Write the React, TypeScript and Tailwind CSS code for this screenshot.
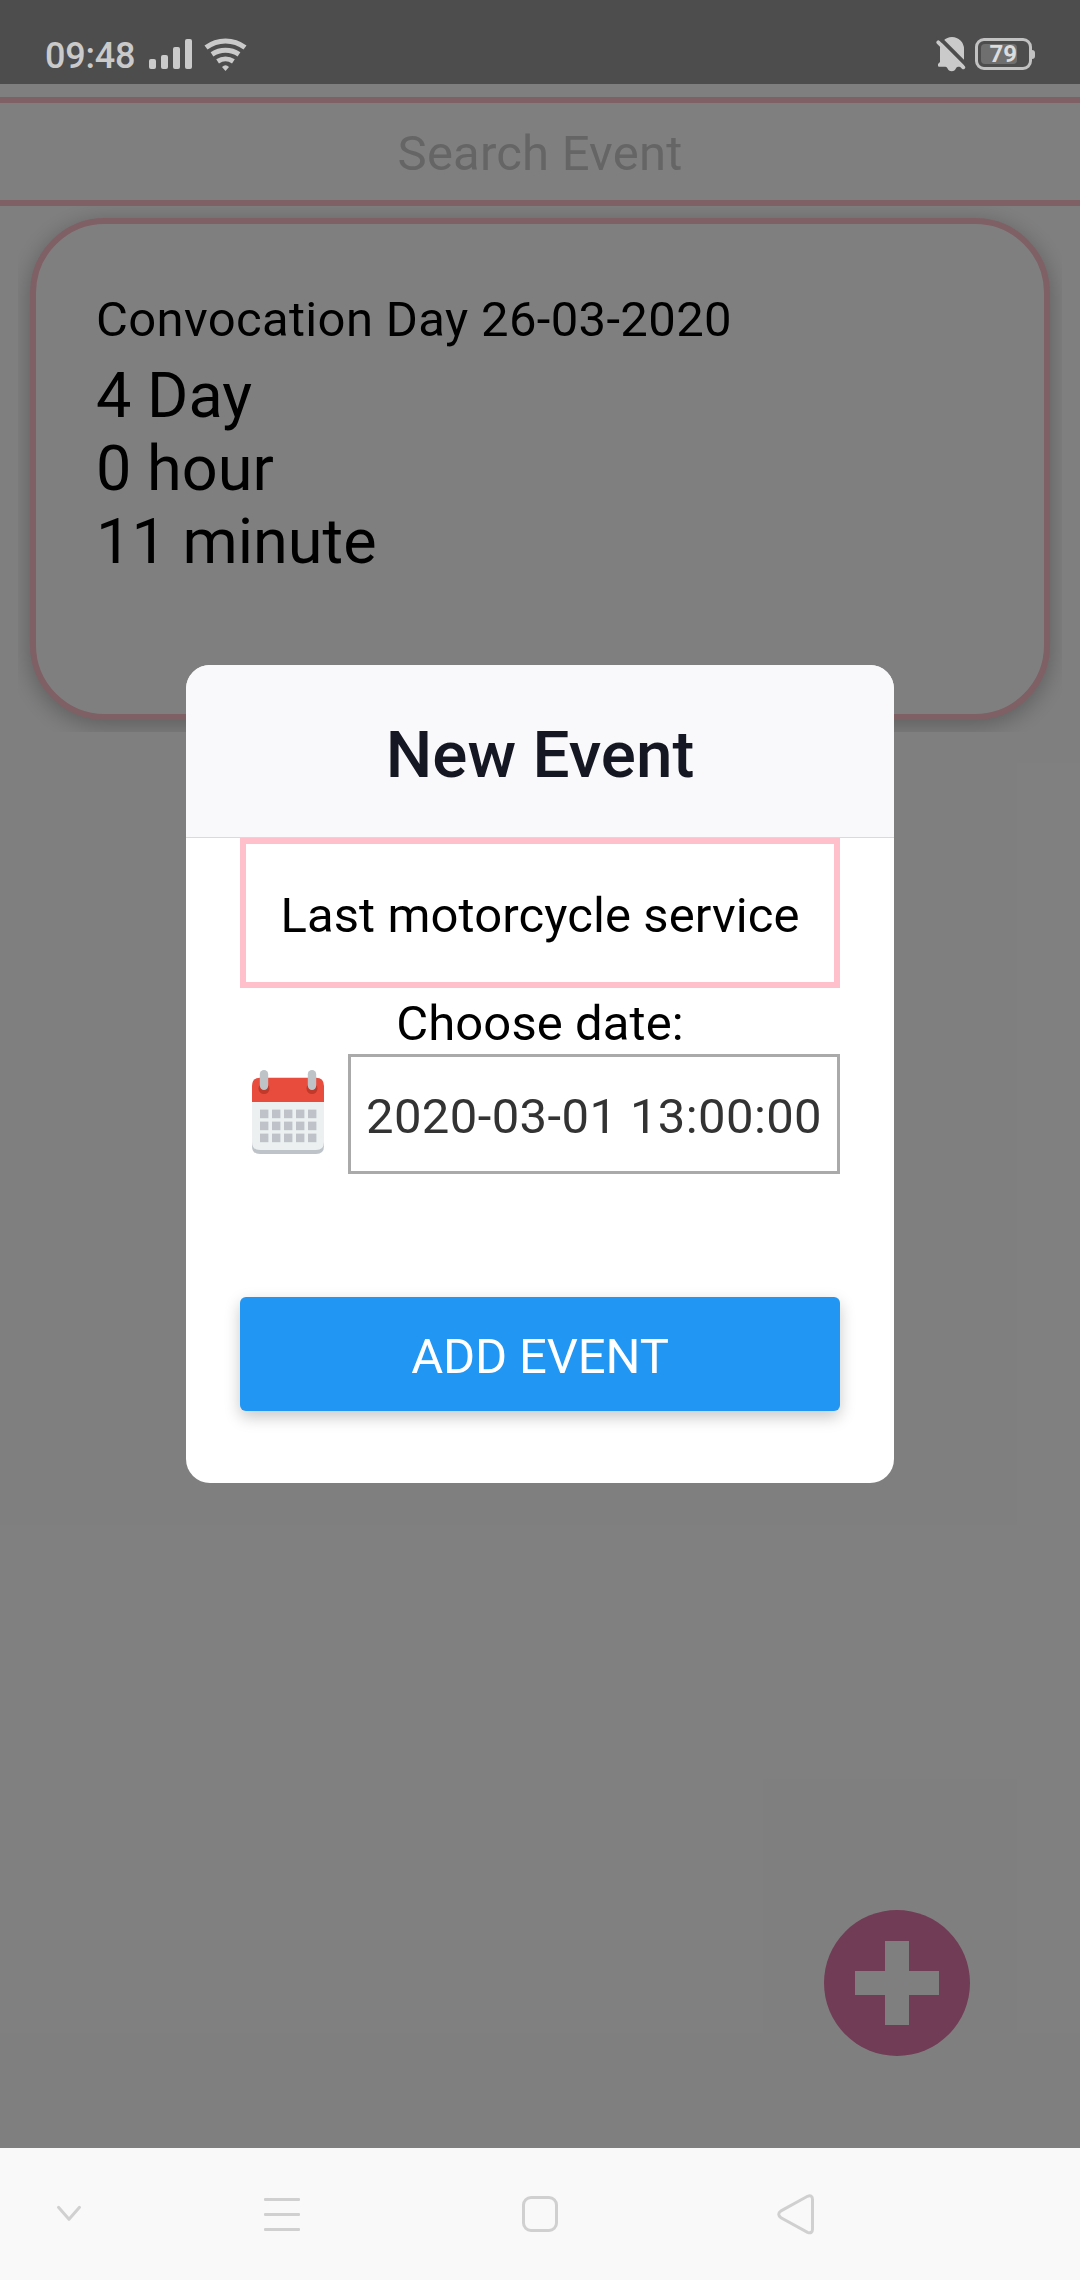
import React from "react";

function WifiIcon() {
  return (
    <svg className="ml-[11.5px] mt-[37px] h-[36px] w-[44px]" viewBox="0 0 44 36" fill="none" stroke="#cacaca" strokeWidth="5">
      <path d="M2 10.5A32.5 32.5 0 0 1 41 10.5" />
      <path d="M8 17.4A24.5 24.5 0 0 1 35 17.4" />
      <path d="M13.6 24.4A14.5 14.5 0 0 1 29.4 24.4" />
      <path d="M18 30Q21.5 26.6 25 30L21.5 34Z" fill="#cacaca" stroke="none" />
    </svg>
  );
}

function BellOffIcon() {
  return (
    <svg className="mt-[36px] h-[36px] w-[32px]" viewBox="0 0 32 36">
      <path
        d="M4 13A12 12 0 0 1 28 13V30.7H22Q20.5 30.7 20 32.2A4.6 4.6 0 0 1 11.4 32.2Q11 30.7 9.4 30.7H3Q2 30.7 2 29.7V28L4 26Z"
        fill="#cacaca"
      />
      <path d="M1 -.5L33 31.5" stroke="#4d4d4d" strokeWidth="4" />
      <path d="M2.3 6.3L27.3 31.3" stroke="#cacaca" strokeWidth="3.8" strokeLinecap="round" />
    </svg>
  );
}

function StatusBar() {
  return (
    <header className="flex h-[84px] items-start bg-[#4d4d4d] text-[#cacaca]">
      <span className="ml-[45px] mt-[35px] w-[104px] text-[36px] font-medium leading-[43px] tracking-[-0.25px]">09:48</span>
      <div className="mt-[39px] flex h-[30px] items-end gap-[5px]">
        <i className="h-[10px] w-[7px] rounded-[2px] bg-[#cacaca]" />
        <i className="h-[14px] w-[7px] rounded-[2px] bg-[#cacaca]" />
        <i className="h-[22px] w-[7px] rounded-[2px] bg-[#cacaca]" />
        <i className="h-[30px] w-[7px] rounded-[2px] bg-[#cacaca]" />
      </div>
      <WifiIcon />
      <div className="ml-auto mr-[45px] flex items-start">
        <BellOffIcon />
        <div className="ml-[7px] mt-[38px] flex items-center">
          <div className="h-[32px] w-[57px] rounded-[9px] border-[3px] border-[#c2c2c2] p-[3px]">
            <div className="flex h-[20px] w-[36px] items-center justify-end rounded-[4px] bg-[#6f6f6f]">
              <span className="text-[24px] font-bold leading-[20px] text-[#dcdcdc]">79</span>
            </div>
          </div>
          <i className="h-[9px] w-[3px] rounded-r-[3px] bg-[#c2c2c2]" />
        </div>
      </div>
    </header>
  );
}

function EventCard() {
  return (
    <section className="mx-[18px] h-[526px] overflow-hidden p-[12px]">
      <article className="h-[502px] rounded-[75px] border-[6px] border-[#ffc0cb] bg-white px-[60px] pt-[67px] text-black shadow-[0_5px_24px_rgba(0,0,0,0.28)]">
        <h2 className="whitespace-nowrap text-[49px] leading-[58px] tracking-[0.35px]">Convocation Day 26-03-2020</h2>
        <div className="mt-[10px] text-[63px] leading-[73px]">
          <p>4 Day</p>
          <p>0 hour</p>
          <p>11 minute</p>
        </div>
      </article>
    </section>
  );
}

function AddButton() {
  return (
    <svg className="absolute left-[824px] top-[1826px] h-[146px] w-[146px]" viewBox="0 0 146 146">
      <circle cx="73" cy="73" r="73" fill="#e379aa" />
      <path d="M61 31h24v30h30v24H85v30H61V85H31V61h30Z" fill="#fff" />
    </svg>
  );
}

const columns = [8, 20, 32, 44, 56];
const rows = [40.6, 52.6, 64.6];

function CalendarIcon() {
  return (
    <svg className="h-[86px] w-[72px]" viewBox="0 0 72 86">
      <path d="M0 70H72V77Q72 85 64 85H8Q0 85 0 77Z" fill="#bdc3c9" />
      <path d="M0 32H72V73Q72 81 64 81H8Q0 81 0 73Z" fill="#ecf0f1" />
      <path d="M0 33V17Q0 8.7 8 8.7H64Q72 8.7 72 17V33Z" fill="#e84c3d" />
      <circle cx="12" cy="19.5" r="5.5" fill="#c0392b" />
      <circle cx="60" cy="19.5" r="5.5" fill="#c0392b" />
      <rect x="7.8" y="1" width="8.4" height="20" rx="4.2" fill="#bdc3c7" />
      <rect x="55.8" y="1" width="8.4" height="20" rx="4.2" fill="#bdc3c7" />
      {rows.map((y) => columns.map((x) => <rect key={`${x}-${y}`} x={x} y={y} width="8.4" height="8.6" fill="#bfc3c9" />))}
    </svg>
  );
}

function NewEventDialog() {
  return (
    <div className="absolute left-[186px] top-[581px] h-[818px] w-[708px] overflow-hidden rounded-[24px] bg-white">
      <div className="flex h-[173px] items-center justify-center border-b border-[#dadada] bg-[#f9f9fb] pt-[7px]">
        <h1 className="text-[65.6px] font-medium leading-[78px] text-[#151822]">New Event</h1>
      </div>
      <div className="px-[54px] text-[49px] text-black">
        <div className="flex h-[150px] items-center justify-center whitespace-nowrap border-[6px] border-[#ffc0cb] pt-[5px] tracking-[0.1px]">
          Last motorcycle service
        </div>
        <div className="flex h-[66px] items-center justify-center pt-[6px] tracking-[0.1px]">Choose date:</div>
        <div className="flex h-[120px] items-center">
          <div className="ml-[12px] w-[96px] pb-[4px]">
            <CalendarIcon />
          </div>
          <div className="flex h-[120px] w-[492px] items-center justify-center whitespace-nowrap border-[3px] border-[#aaaaaa] pt-[5px] tracking-[0.4px] text-[#333333]">
            2020-03-01 13:00:00
          </div>
        </div>
        <button className="mt-[123px] flex h-[114px] w-full items-center justify-center rounded-[6px] bg-[#2196f3] pt-[5px] tracking-[-0.15px] text-white shadow-[0_6px_16px_rgba(0,0,0,0.22)]">
          ADD EVENT
        </button>
      </div>
    </div>
  );
}

function NavigationBar() {
  return (
    <nav className="flex h-[132px] bg-[#f9f9f9]">
      <svg className="ml-[56px] mt-[56px] h-[20px] w-[26px]" viewBox="0 0 26 20" fill="none" stroke="#d0d0d0" strokeWidth="3" strokeLinecap="round" strokeLinejoin="round">
        <path d="M2.5 3.3L13 15.3L23.5 3.3" />
      </svg>
      <div className="ml-[182px] mt-[50px] flex w-[36px] flex-col gap-[12px]">
        <i className="h-[3px] rounded-[1px] bg-[#d0d0d0]" />
        <i className="h-[3px] rounded-[1px] bg-[#d0d0d0]" />
        <i className="h-[3px] rounded-[1px] bg-[#d0d0d0]" />
      </div>
      <div className="ml-[222px] mt-[48px] h-[36px] w-[36px] rounded-[9px] border-[3px] border-[#d0d0d0]" />
      <svg className="ml-[218px] mt-[45px] h-[43px] w-[40px]" viewBox="0 0 40 43" fill="none" stroke="#d0d0d0" strokeWidth="3">
        <path d="M5 17.9L31.5 3.3Q36.5 1.6 36.5 6.5V36.2Q36.5 41 31.5 39.3L5 24.7Q0.4 21.3 5 17.9Z" />
      </svg>
    </nav>
  );
}

export default function App() {
  return (
    <div className="flex h-[2280px] w-[1080px] flex-col overflow-hidden font-['Roboto',sans-serif]">
      <StatusBar />
      <main className="relative h-[2064px] bg-white">
        <div className="pt-[13px]">
          <div className="flex h-[109px] items-center justify-center border-y-[6px] border-[#ffc0cb] pt-[5px] text-[49px] tracking-[0.2px] text-[#cbcbcb]">
            Search Event
          </div>
          <EventCard />
        </div>
        <AddButton />
        <div className="absolute inset-0 bg-black/50" />
        <NewEventDialog />
      </main>
      <NavigationBar />
    </div>
  );
}
